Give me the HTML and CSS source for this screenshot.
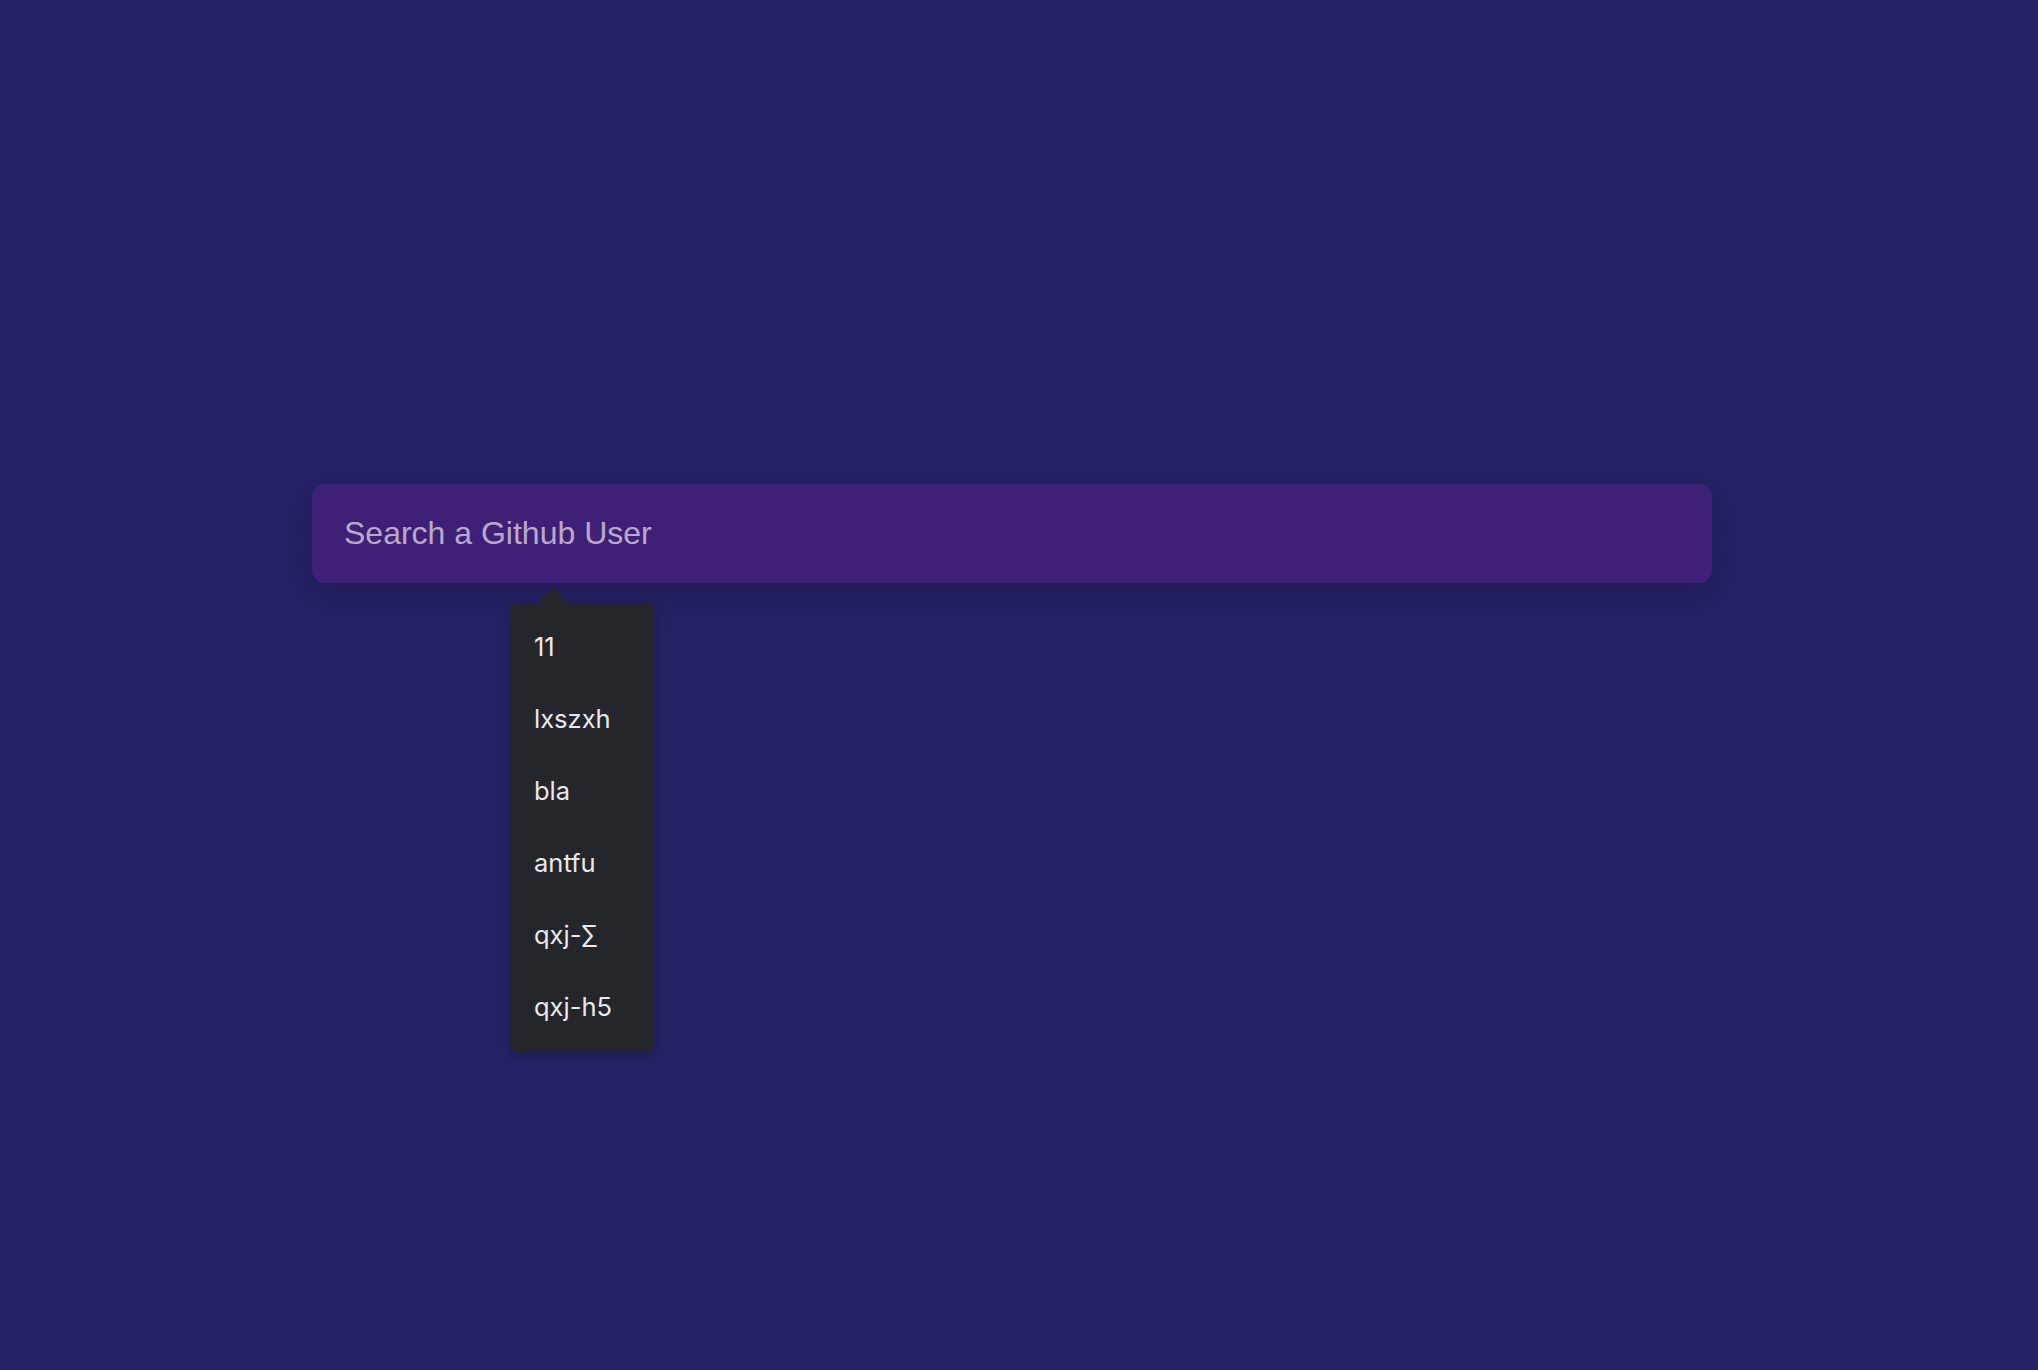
FILE: index.html
```html
<!DOCTYPE html>
<html lang="en">

<head>
  <meta charset="UTF-8">
  <meta name="viewport" content="width=device-width, initial-scale=1.0">
  <title>github user search</title>
  <link rel="stylesheet" href="styles.css">
</head>

<body>
  <div class="page">
    <div class="search">
      <input class="search-input" type="text" placeholder="Search a Github User">

      <ul class="suggest">
        <li>11</li>
        <li>lxszxh</li>
        <li>bla</li>
        <li>antfu</li>
        <li>qxj-∑</li>
        <li>qxj-h5</li>
      </ul>
    </div>
  </div>
</body>

</html>
```

FILE: styles.css
```css
html,
body {
  margin: 0;
  height: 100%;
}

body {
  background-color: #252366;
  font-family: "Liberation Sans", Arial, sans-serif;
}

.page {
  display: flex;
  justify-content: center;
  padding: 484px 14px 0 0;
}

.search {
  width: 1400px;
  position: relative;
}

.search-input {
  display: block;
  box-sizing: border-box;
  width: 100%;
  height: 99px;
  padding: 0 32px;
  border: none;
  border-radius: 13px;
  outline: none;
  background-color: #3f2077;
  color: #fff;
  font-family: "Liberation Sans", Arial, sans-serif;
  font-size: 32px;
  box-shadow: 0 10px 36px rgba(10, 10, 40, 0.3);
}

.search-input::placeholder {
  color: #b8aac8;
}

/* dropdown */
.suggest {
  position: absolute;
  left: 198px;
  top: 119px;
  margin: 0;
  padding: 8px 0;
  list-style: none;
  width: 144px;
  box-sizing: border-box;
  background-color: #25262b;
  border-radius: 6px;
  box-shadow: 0 4px 14px rgba(0, 0, 0, 0.25);
}

/* small arrow pointing to the input */
.suggest::before {
  content: "";
  position: absolute;
  left: 27px;
  top: -16px;
  border-left: 16px solid transparent;
  border-right: 16px solid transparent;
  border-bottom: 16px solid #25262b;
}

.suggest li {
  height: 72px;
  line-height: 72px;
  padding: 0 24px;
  color: #e9e9ec;
  font-family: Inter, "Noto Sans", sans-serif;
  font-size: 25.5px;
  white-space: nowrap;
}
```
